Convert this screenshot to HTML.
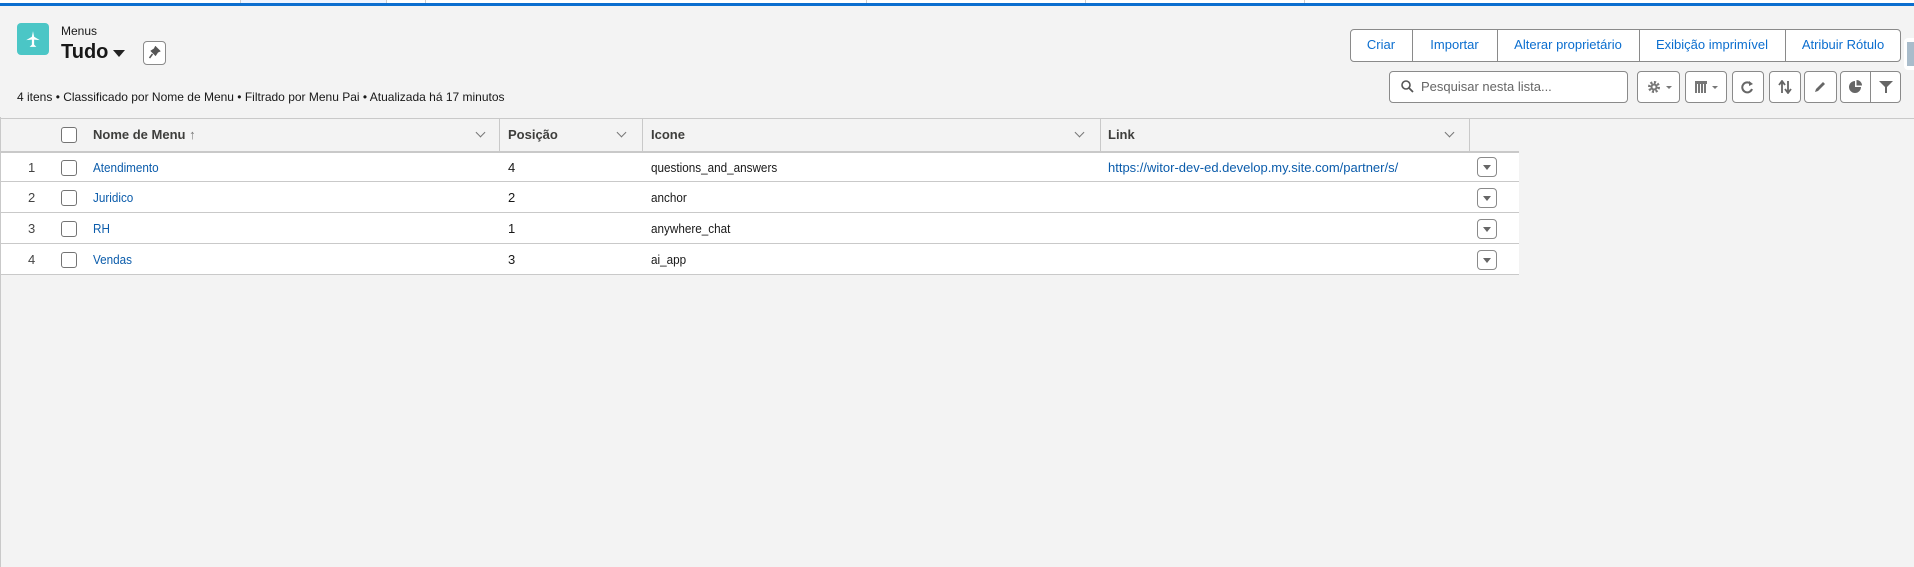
<!DOCTYPE html>
<html><head><meta charset="utf-8"><style>
*{box-sizing:border-box;margin:0;padding:0}
body{width:1914px;height:567px;background:#f3f3f3;font-family:"Liberation Sans",sans-serif;color:#181818;position:relative;overflow:hidden}
.a{position:absolute}
.t{position:absolute;white-space:nowrap;transform-origin:0 50%;font-size:13px;line-height:16px}
.c{transform:scaleX(.9)}
.lk{color:#0b5cab}
.btn{position:absolute;border:1px solid #8a8a8a;background:#fff;border-radius:4px}
.bt{position:absolute;top:29px;height:33px;line-height:31px;font-size:13px;color:#0b6ecf;text-align:center;white-space:nowrap}
.hl{position:absolute;left:1px;width:1518px;height:1px;background:#c9c9c9}
.cb{position:absolute;left:61px;width:16px;height:16px;border:1px solid #747474;border-radius:3px;background:#fff}
.chev{position:absolute;width:7px;height:7px;border-right:1px solid #777;border-bottom:1px solid #777;transform:rotate(45deg)}
.act{position:absolute;left:1477px;width:20px;height:20px;border:1px solid #8a8a8a;border-radius:4px;background:#fff}
.act:after{content:"";position:absolute;left:5px;top:7px;border-left:4px solid transparent;border-right:4px solid transparent;border-top:5px solid #666}
.ib{position:absolute;top:71px;height:32px;border:1px solid #8a8a8a;border-radius:4px;background:#fff}
.sep{position:absolute;top:119px;width:1px;height:32px;background:#c9c9c9}
</style></head><body>
<div class="a" style="left:0;top:0;width:1914px;height:3px;background:#fff"></div>
<div class="a" style="left:240px;top:0;width:146px;height:3px;background:#eef4ff"></div>
<div class="a" style="left:240px;top:0;width:1px;height:3px;background:#ccc"></div>
<div class="a" style="left:386px;top:0;width:1px;height:3px;background:#ccc"></div>
<div class="a" style="left:425px;top:0;width:1px;height:3px;background:#ccc"></div>
<div class="a" style="left:866px;top:0;width:1px;height:3px;background:#ccc"></div>
<div class="a" style="left:1085px;top:0;width:1px;height:3px;background:#ccc"></div>
<div class="a" style="left:1304px;top:0;width:1px;height:3px;background:#ccc"></div>
<div class="a" style="left:0;top:3px;width:1914px;height:3px;background:#0b6ecf"></div>

<div class="a" style="left:17px;top:23px;width:32px;height:32px;background:#4bc6c6;border-radius:4px"></div>
<svg class="a" style="left:24px;top:30px" width="18" height="18" viewBox="0 0 16 16"><path d="M8 1 L9 6 L14 9 L9 8.5 L9 13 L11 15 L5 15 L7 13 L7 8.5 L2 9 L7 6 Z" fill="#fff"/></svg>
<div class="t" style="left:61px;top:23px;font-size:12px">Menus</div>
<div class="t" style="left:61px;top:40px;font-size:20px;line-height:24px;font-weight:bold">Tudo</div>
<div class="a" style="left:113px;top:50px;border-left:6px solid transparent;border-right:6px solid transparent;border-top:7px solid #222"></div>
<div class="btn" style="left:143px;top:41px;width:23px;height:24px"></div>
<svg class="a" style="left:148px;top:46px" width="13" height="14" viewBox="0 0 12 14"><path d="M7 1 L11 5 L9 6 L7 9 L3 5 L6 3 Z M4 8 L1 12" stroke="#555" stroke-width="1.5" fill="#555"/></svg>
<div class="t" style="left:17px;top:89px;font-size:12px">4 itens • Classificado por Nome de Menu • Filtrado por Menu Pai • Atualizada há 17 minutos</div>

<!-- top buttons -->
<div class="btn" style="left:1350px;top:29px;width:551px;height:33px"></div>
<div class="a" style="left:1412px;top:29px;width:1px;height:33px;background:#8a8a8a"></div>
<div class="a" style="left:1497px;top:29px;width:1px;height:33px;background:#8a8a8a"></div>
<div class="a" style="left:1639px;top:29px;width:1px;height:33px;background:#8a8a8a"></div>
<div class="a" style="left:1785px;top:29px;width:1px;height:33px;background:#8a8a8a"></div>
<div class="bt" style="left:1350px;width:62px">Criar</div>
<div class="bt" style="left:1412px;width:85px">Importar</div>
<div class="bt" style="left:1497px;width:142px">Alterar proprietário</div>
<div class="bt" style="left:1639px;width:146px">Exibição imprimível</div>
<div class="bt" style="left:1785px;width:116px">Atribuir Rótulo</div>
<div class="a" style="left:1904px;top:38px;width:10px;height:32px;background:#fff;border-radius:4px 0 0 4px"></div>
<div class="a" style="left:1907px;top:42px;width:7px;height:24px;background:#a9bccb"></div>

<!-- search & icon buttons -->
<div class="ib" style="left:1389px;width:239px"></div>
<svg class="a" style="left:1401px;top:80px" width="13" height="13" viewBox="0 0 13 13"><circle cx="5" cy="5" r="4" stroke="#555" stroke-width="1.6" fill="none"/><path d="M8 8 L12 12" stroke="#555" stroke-width="1.8"/></svg>
<div class="a" style="left:1421px;top:79px;font-size:13px;color:#666;white-space:nowrap">Pesquisar nesta lista...</div>
<div class="ib" style="left:1637px;width:43px"></div>
<svg class="a" style="left:1647px;top:80px" width="14" height="14" viewBox="0 0 14 14"><circle cx="7" cy="7" r="4.5" fill="none" stroke="#777" stroke-width="3" stroke-dasharray="2 1.5"/><circle cx="7" cy="7" r="2.5" fill="none" stroke="#777" stroke-width="2"/></svg>
<div class="a" style="left:1666px;top:86px;border-left:3px solid transparent;border-right:3px solid transparent;border-top:3px solid #777"></div>
<div class="ib" style="left:1685px;width:42px"></div>
<div class="a" style="left:1695px;top:81px;width:12px;height:12px;background:repeating-linear-gradient(90deg,#777 0 2px,#fff 2px 3px);border-top:3px solid #777"></div>
<div class="a" style="left:1712px;top:86px;border-left:3px solid transparent;border-right:3px solid transparent;border-top:3px solid #777"></div>
<div class="ib" style="left:1732px;width:32px"></div>
<svg class="a" style="left:1741px;top:80px" width="13" height="14" viewBox="0 0 13 14"><path d="M10 4 A5 5 0 1 0 11 9" stroke="#666" stroke-width="2" fill="none"/><path d="M8 1 L12 4 L8 6Z" fill="#666"/></svg>
<div class="ib" style="left:1769px;width:32px"></div>
<svg class="a" style="left:1778px;top:80px" width="14" height="14" viewBox="0 0 14 14"><path d="M4 13 V2 M1 5 L4 1 L7 5 M10 1 V12 M7 9 L10 13 L13 9" stroke="#666" stroke-width="1.8" fill="none"/></svg>
<div class="ib" style="left:1804px;width:33px"></div>
<svg class="a" style="left:1814px;top:80px" width="13" height="13" viewBox="0 0 13 13"><path d="M1 12 L2 9 L9 2 L11 4 L4 11 Z" fill="#666"/></svg>
<div class="ib" style="left:1840px;width:61px"></div>
<div class="a" style="left:1870px;top:71px;width:1px;height:32px;background:#8a8a8a"></div>
<svg class="a" style="left:1848px;top:80px" width="14" height="14" viewBox="0 0 14 14"><path d="M7 1 A6 6 0 1 0 13 7 L7 7 Z" fill="#666"/><path d="M8.5 0 A5.5 5.5 0 0 1 14 5.5 L8.5 5.5Z" fill="#666"/></svg>
<svg class="a" style="left:1879px;top:80px" width="14" height="14" viewBox="0 0 14 14"><path d="M0 1 H14 L8 7 V13 L6 13 V7 Z" fill="#666"/></svg>

<!-- table -->
<div class="a" style="left:0;top:117px;width:1px;height:450px;background:#c9c9c9"></div>
<div class="a" style="left:1px;top:118px;width:1913px;height:1px;background:#c9c9c9"></div>
<div class="a" style="left:1px;top:151px;width:1518px;height:123px;background:#fff"></div>
<div class="hl" style="top:151px;height:2px"></div>
<div class="hl" style="top:181px"></div>
<div class="hl" style="top:212px"></div>
<div class="hl" style="top:243px"></div>
<div class="hl" style="top:274px"></div>
<div class="sep" style="left:499px"></div>
<div class="sep" style="left:642px"></div>
<div class="sep" style="left:1100px"></div>
<div class="sep" style="left:1469px"></div>

<div class="cb" style="top:127px"></div>
<div class="t" style="left:93px;top:127px;font-weight:bold;color:#3e3e3c">Nome de Menu <span style="font-weight:normal;color:#777">↑</span></div>
<div class="chev" style="left:477px;top:129px"></div>
<div class="t" style="left:508px;top:127px;font-weight:bold;color:#3e3e3c">Posição</div>
<div class="chev" style="left:618px;top:129px"></div>
<div class="t" style="left:651px;top:127px;font-weight:bold;color:#3e3e3c">Icone</div>
<div class="chev" style="left:1076px;top:129px"></div>
<div class="t" style="left:1108px;top:127px;font-weight:bold;color:#3e3e3c">Link</div>
<div class="chev" style="left:1446px;top:129px"></div>

<div class="t" style="left:28px;top:160px;color:#444">1</div>
<div class="cb" style="top:160px"></div>
<div class="t c lk" style="left:93px;top:160px">Atendimento</div>
<div class="t" style="left:508px;top:160px">4</div>
<div class="t c" style="left:651px;top:160px">questions_and_answers</div>
<div class="t lk" style="left:1108px;top:160px">https://witor-dev-ed.develop.my.site.com/partner/s/</div>
<div class="act" style="top:157px"></div>

<div class="t" style="left:28px;top:190px;color:#444">2</div>
<div class="cb" style="top:190px"></div>
<div class="t c lk" style="left:93px;top:190px">Juridico</div>
<div class="t" style="left:508px;top:190px">2</div>
<div class="t c" style="left:651px;top:190px">anchor</div>
<div class="act" style="top:188px"></div>

<div class="t" style="left:28px;top:221px;color:#444">3</div>
<div class="cb" style="top:221px"></div>
<div class="t c lk" style="left:93px;top:221px">RH</div>
<div class="t" style="left:508px;top:221px">1</div>
<div class="t c" style="left:651px;top:221px">anywhere_chat</div>
<div class="act" style="top:219px"></div>

<div class="t" style="left:28px;top:252px;color:#444">4</div>
<div class="cb" style="top:252px"></div>
<div class="t c lk" style="left:93px;top:252px">Vendas</div>
<div class="t" style="left:508px;top:252px">3</div>
<div class="t c" style="left:651px;top:252px">ai_app</div>
<div class="act" style="top:250px"></div>
</body></html>
